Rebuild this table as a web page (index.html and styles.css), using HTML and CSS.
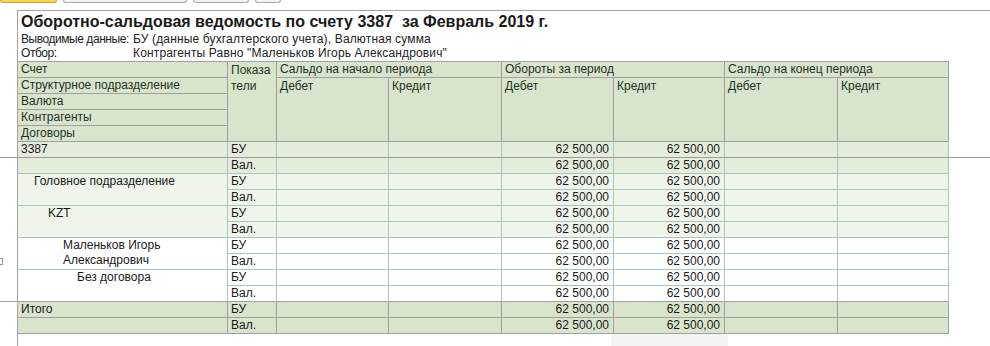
FILE: index.html
```html
<!DOCTYPE html>
<html lang="ru">
<head>
<meta charset="utf-8">
<title>Оборотно-сальдовая ведомость</title>
<link rel="stylesheet" href="styles.css">
</head>
<body>
<div class="toolbar">
  <span class="btn btn-yellow"></span>
  <span class="btn btn-w1"></span>
  <span class="btn btn-w2"></span>
  <span class="btn btn-w3"></span>
</div>
<div class="sheet">
  <div class="freeze-line"></div>
  <div class="group-line"></div>
  <div class="group-box"></div>
  <h1 class="title">Оборотно-сальдовая ведомость по счету 3387&nbsp; за Февраль 2019 г.</h1>
  <div class="info">
    <span class="lbl">Выводимые данные:</span><span class="val">БУ (данные бухгалтерского учета), Валютная сумма</span>
    <span class="lbl">Отбор:</span><span class="val">Контрагенты Равно "Маленьков Игорь Александрович"</span>
  </div>
  <table class="report">
    <colgroup>
      <col class="c1"><col class="c2"><col class="c3"><col class="c4"><col class="c5"><col class="c6"><col class="c7"><col class="c8">
    </colgroup>
    <tbody>
      <tr class="h">
        <td>Счет</td>
        <td rowspan="5">Показа<br>тели</td>
        <td colspan="2">Сальдо на начало периода</td>
        <td colspan="2">Обороты за период</td>
        <td colspan="2">Сальдо на конец периода</td>
      </tr>
      <tr class="h">
        <td>Структурное подразделение</td>
        <td rowspan="4">Дебет</td><td rowspan="4">Кредит</td>
        <td rowspan="4">Дебет</td><td rowspan="4">Кредит</td>
        <td rowspan="4">Дебет</td><td rowspan="4">Кредит</td>
      </tr>
      <tr class="h"><td>Валюта</td></tr>
      <tr class="h"><td>Контрагенты</td></tr>
      <tr class="h hl"><td>Договоры</td></tr>

      <tr class="g1">
        <td class="l0">3387</td><td>БУ</td><td></td><td></td><td class="n">62 500,00</td><td class="n">62 500,00</td><td></td><td></td>
      </tr>
      <tr class="g1">
        <td></td><td>Вал.</td><td></td><td></td><td class="n">62 500,00</td><td class="n">62 500,00</td><td></td><td></td>
      </tr>

      <tr class="g2">
        <td rowspan="2" class="l1">Головное подразделение</td><td>БУ</td><td></td><td></td><td class="n">62 500,00</td><td class="n">62 500,00</td><td></td><td></td>
      </tr>
      <tr class="g2">
        <td>Вал.</td><td></td><td></td><td class="n">62 500,00</td><td class="n">62 500,00</td><td></td><td></td>
      </tr>

      <tr class="g2">
        <td rowspan="2" class="l2">KZT</td><td>БУ</td><td></td><td></td><td class="n">62 500,00</td><td class="n">62 500,00</td><td></td><td></td>
      </tr>
      <tr class="g2">
        <td>Вал.</td><td></td><td></td><td class="n">62 500,00</td><td class="n">62 500,00</td><td></td><td></td>
      </tr>

      <tr class="g3">
        <td rowspan="2" class="l3">Маленьков Игорь Александрович</td><td>БУ</td><td></td><td></td><td class="n">62 500,00</td><td class="n">62 500,00</td><td></td><td></td>
      </tr>
      <tr class="g3">
        <td>Вал.</td><td></td><td></td><td class="n">62 500,00</td><td class="n">62 500,00</td><td></td><td></td>
      </tr>

      <tr class="g3">
        <td rowspan="2" class="l4 gb">Без договора</td><td>БУ</td><td></td><td></td><td class="n">62 500,00</td><td class="n">62 500,00</td><td></td><td></td>
      </tr>
      <tr class="g3 gbrow">
        <td>Вал.</td><td></td><td></td><td class="n">62 500,00</td><td class="n">62 500,00</td><td></td><td></td>
      </tr>

      <tr class="tot">
        <td class="l0">Итого</td><td>БУ</td><td></td><td></td><td class="n">62 500,00</td><td class="n">62 500,00</td><td></td><td></td>
      </tr>
      <tr class="tot">
        <td></td><td>Вал.</td><td></td><td></td><td class="n">62 500,00</td><td class="n">62 500,00</td><td></td><td></td>
      </tr>

      <tr class="tail">
        <td></td><td></td><td></td><td></td><td></td><td class="sel"><div class="selbox"></div></td><td></td><td></td>
      </tr>
    </tbody>
  </table>
</div>
</body>
</html>
```
FILE: styles.css
```css
html, body {
  margin: 0;
  padding: 0;
  background: #ffffff;
  overflow: hidden;
}
body {
  font-family: "Liberation Sans", Arial, sans-serif;
  font-size: 12px;
  color: #1a1a1a;
  width: 990px;
  height: 346px;
}

/* toolbar remnants at the very top */
.toolbar {
  display: flex;
  height: 3px;
  overflow: hidden;
}
.btn {
  display: block;
  height: 2px;
  border: 1px solid #a9a9a9;
  border-top: none;
  border-radius: 0 0 3px 3px;
  background: #f2f2f2;
}
.btn-yellow {
  width: 55px;
  background: #f7d54a;
  border-color: #c9a43a;
}
.btn-w1 { width: 122px; margin-left: 6px; }
.btn-w2 { width: 54px; margin-left: 6px; }
.btn-w3 { width: 24px; margin-left: 6px; }

/* spreadsheet document frame */
.sheet {
  position: relative;
  margin-top: 7px;
  margin-left: 17px;
  border-top: 1px solid #a3a3a3;
  border-left: 1px solid #a3a3a3;
  height: 335px;
}
.freeze-line {
  position: absolute;
  left: -18px;
  right: 0;
  top: 146px;
  height: 1px;
  background: #9c9c9c;
  z-index: 2;
}
.group-line {
  position: absolute;
  left: -18px;
  width: 18px;
  top: 290px;
  height: 1px;
  background: #a3a3a3;
}
.group-box {
  position: absolute;
  left: -22px;
  top: 247px;
  width: 5px;
  height: 5px;
  border: 1px solid #9a9a9a;
  background: #fff;
}

.title {
  margin: 1px 0 0 0;
  padding-left: 3px;
  font-size: 16px;
  line-height: 20px;
  font-weight: bold;
  color: #1a1a1a;
  white-space: nowrap;
}

.info {
  display: grid;
  grid-template-columns: 112px auto;
  padding-left: 3px;
  line-height: 14px;
  color: #222;
  white-space: nowrap;
}
.info .lbl { letter-spacing: -0.45px; }
.info .val { letter-spacing: 0.15px; }

/* report table */
.report {
  margin-top: 1px;
  width: 931px;
  table-layout: fixed;
  border-collapse: separate;
  border-spacing: 0;
  border-top: 1px solid #a0a0a0;
}
.c1 { width: 210px; }
.c2 { width: 49px; }
.c3 { width: 112px; }
.c4 { width: 113px; }
.c5 { width: 112px; }
.c6 { width: 111px; }
.c7 { width: 113px; }
.c8 { width: 111px; }

.report td {
  box-sizing: border-box;
  height: 16px;
  padding: 0 3px;
  line-height: 15px;
  vertical-align: top;
  white-space: nowrap;
  overflow: hidden;
  border-right: 1px solid #a8c7ba;
  border-bottom: 1px solid #a8c7ba;
}

.h td {
  background: #d8e4cc;
  border-color: #a0a0a0;
  color: #1f3327;
}
.h td[rowspan] { line-height: 16px; white-space: normal; }

.g1 td { background: #e4eddb; }
.g2 td { background: #eff5ea; }
.g3 td { background: #ffffff; }
.tot td {
  background: #d8e4cc;
  border-color: #a0a0a0;
}
.gbrow td, td.gb { border-bottom-color: #a0a0a0; }

.report td.n { text-align: right; padding-right: 4px; }
.report td.l0 { padding-left: 3px; }
.report td.l1 { padding-left: 16px; }
.report td.l2 { padding-left: 30px; }
.report td.l3 { padding-left: 45px; white-space: normal; }
.report td.l4 { padding-left: 59px; }

.report .tail td {
  border: none;
  background: transparent;
  height: 12px;
  padding: 0;
  overflow: visible;
}
.selbox {
  margin: 0 -3px;
  height: 12px;
  background: #f4f4f4;
}
```
